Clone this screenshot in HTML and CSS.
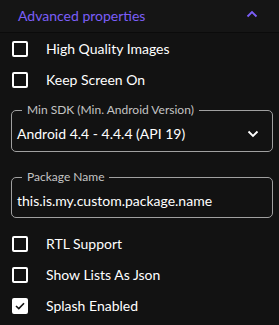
FILE: index.html
```html
<!DOCTYPE html>
<html lang="en">
<head>
    <meta charset="UTF-8">
    <meta name="viewport" content="width=device-width, initial-scale=1.0">
    <title>Advanced properties</title>
    <link rel="stylesheet" href="styles.css">
</head>
<body>

    <div class="panel">
        <div class="panel-header">
            <span class="panel-title">Advanced properties</span>
            <svg class="chevron-up" width="12" height="8" viewBox="0 0 12 8">
                <path d="M1.5 6.5 L6 2 L10.5 6.5" fill="none" stroke="#7b5ef8" stroke-width="1.8"/>
            </svg>
        </div>

        <div class="panel-body">
            <label class="check-row">
                <span class="check-box"></span>
                <span class="check-label">High Quality Images</span>
            </label>
            <label class="check-row">
                <span class="check-box"></span>
                <span class="check-label">Keep Screen On</span>
            </label>

            <fieldset class="field field-select">
                <legend>Min SDK (Min. Android Version)</legend>
                <div class="field-value">
                    <span>Android 4.4 - 4.4.4 (API 19)</span>
                    <svg class="chevron-down" width="12" height="8" viewBox="0 0 12 8">
                        <path d="M1.5 1.5 L6 6 L10.5 1.5" fill="none" stroke="#ffffff" stroke-width="1.8"/>
                    </svg>
                </div>
            </fieldset>

            <fieldset class="field field-text">
                <legend>Package Name</legend>
                <div class="field-value">
                    <span>this.is.my.custom.package.name</span>
                </div>
            </fieldset>

            <label class="check-row">
                <span class="check-box"></span>
                <span class="check-label">RTL Support</span>
            </label>
            <label class="check-row">
                <span class="check-box"></span>
                <span class="check-label">Show Lists As Json</span>
            </label>
            <label class="check-row">
                <span class="check-box checked">
                    <svg width="10" height="8" viewBox="0 0 10 8">
                        <path d="M1 4 L3.8 6.6 L9 1.2" fill="none" stroke="#111" stroke-width="1.6"/>
                    </svg>
                </span>
                <span class="check-label">Splash Enabled</span>
            </label>
        </div>
    </div>

</body>
</html>
```

FILE: styles.css
```css
body, html {
    margin: 0;
    padding: 0;
    background: #121212;
    font-family: Lato, "Liberation Sans", sans-serif;
    color: #ffffff;
}

.panel {
    width: 279px;
    height: 325px;
    overflow: hidden;
}

.panel-header {
    height: 32px;
    display: flex;
    align-items: center;
    justify-content: space-between;
    padding: 0 21px 0 18px;
    background: #151515;
    border-bottom: 1px solid #0b0b0b;
}

.panel-title {
    color: #7b5ef8;
    font-size: 14px;
    margin-top: -2px;
}

.chevron-up {
    margin-top: -4px;
}

.panel-body {
    padding: 0 6px 0 11px;
    display: flex;
    flex-direction: column;
}

.check-row {
    display: flex;
    align-items: center;
    height: 31px;
    padding-left: 1px;
}

.check-box {
    width: 12px;
    height: 12px;
    border: 2px solid #ffffff;
    border-radius: 2px;
    display: flex;
    align-items: center;
    justify-content: center;
}

.check-box.checked {
    background: #ffffff;
}

.check-label {
    margin-left: 18px;
    font-size: 14px;
}

.field {
    margin: 0;
    padding: 0 5px;
    border: 1px solid #a0a0a0;
    border-radius: 5px;
    box-sizing: border-box;
}

.field legend {
    margin-left: 5px;
    padding: 0 5px;
    font-size: 12px;
    color: #c4c4c4;
    line-height: 14px;
}

.field-select {
    margin-top: 8px;
    height: 49px;
}

.field-text {
    margin-top: 18px;
    margin-bottom: 10px;
    height: 48px;
}

.field-value {
    display: flex;
    align-items: center;
    justify-content: space-between;
    font-size: 14px;
    height: 33px;
    padding-right: 8px;
}
```
